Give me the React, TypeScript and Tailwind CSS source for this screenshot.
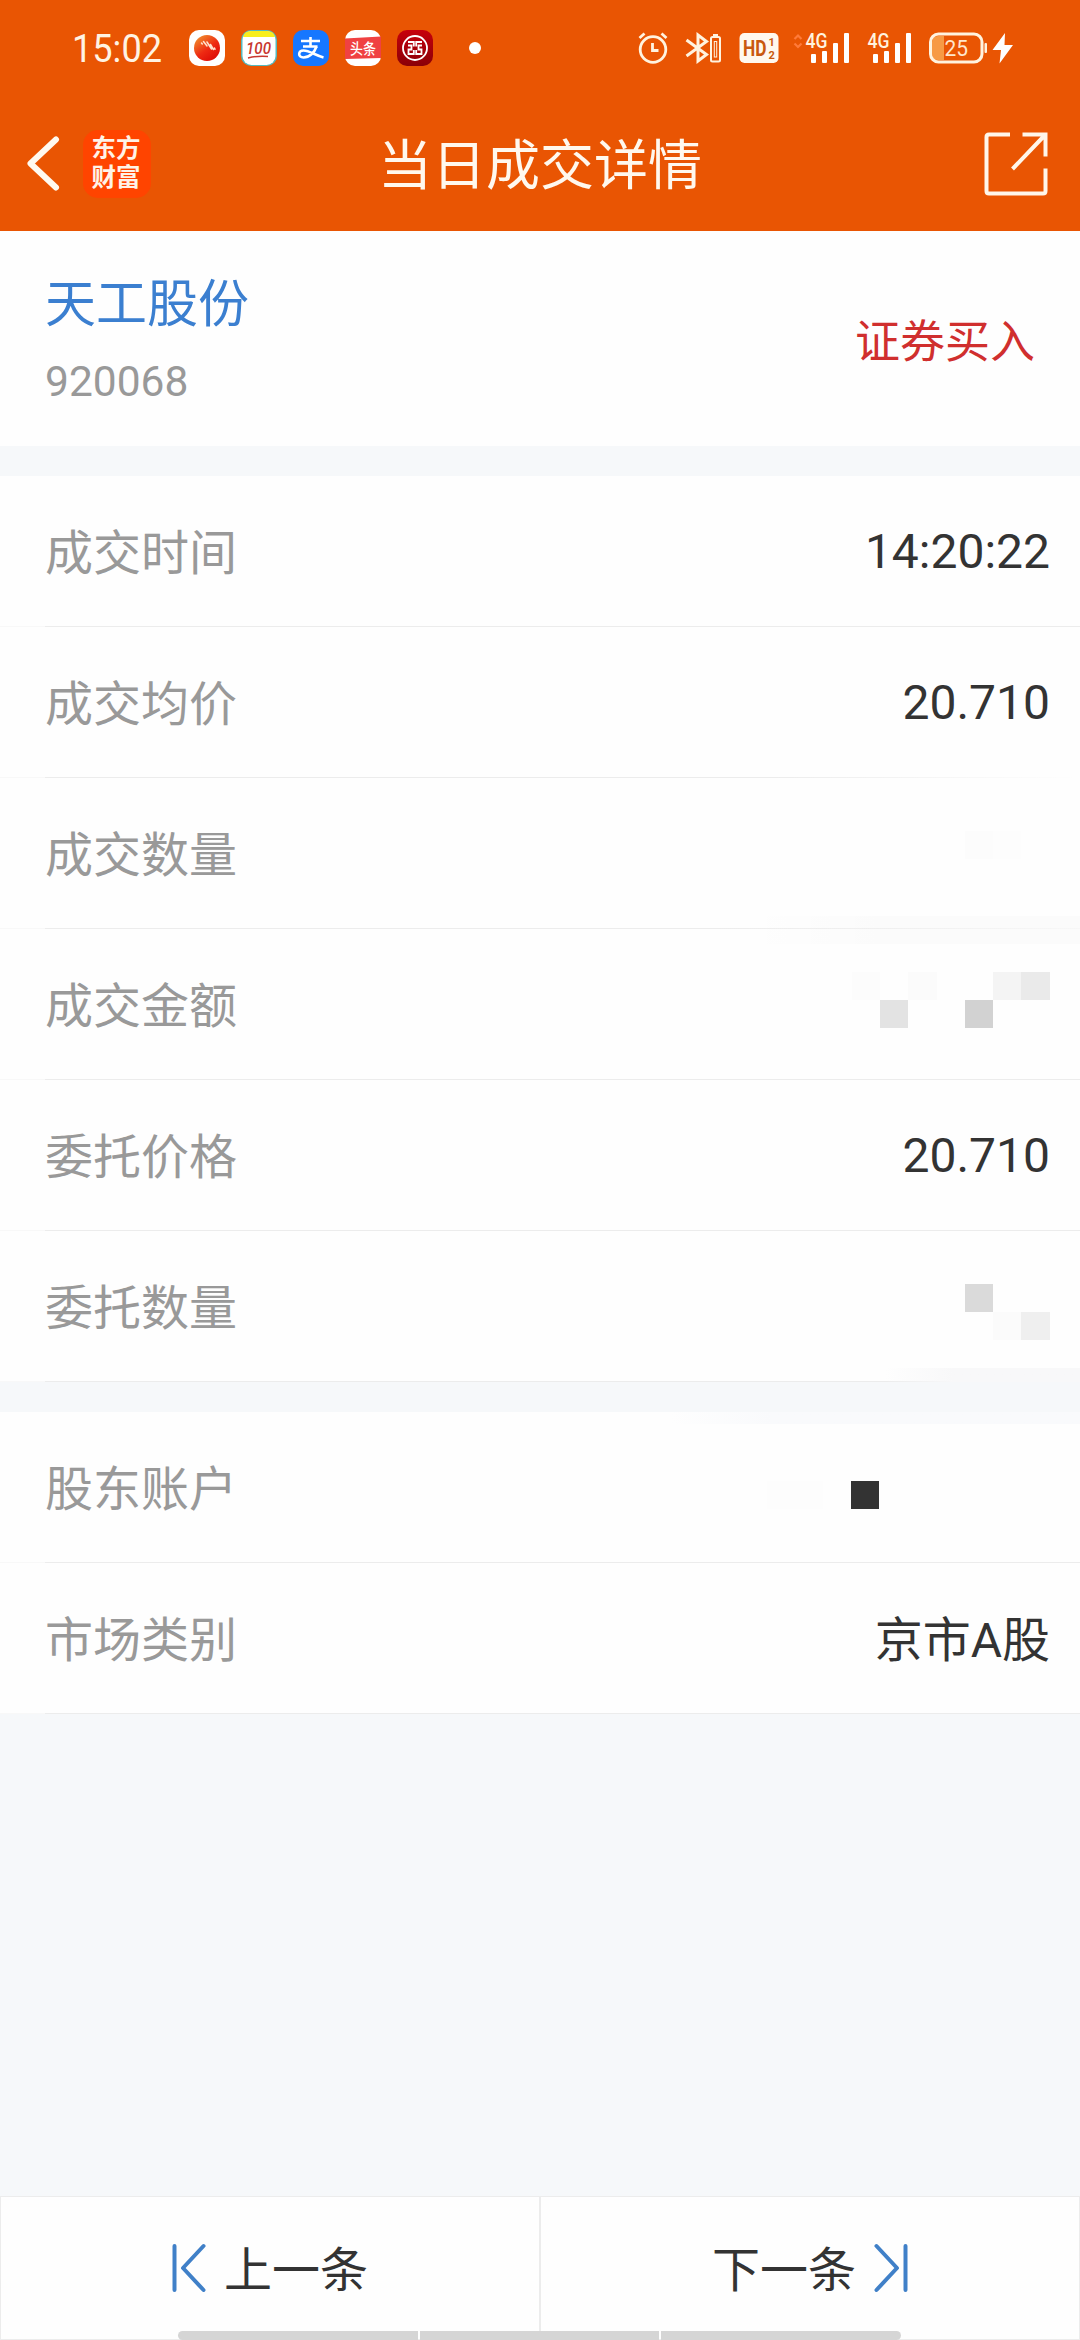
import React from "react";

const MOSAIC_AMOUNT = [
  "bg-[#fcfcfc]", "", "bg-[#fbfbfb]", "", "", "bg-[#f4f4f4]", "bg-[#eaeaea]",
  "", "bg-[#e3e3e3]", "", "", "bg-[#d2d2d2]", "", "",
];

const MOSAIC_ENTRUST = [
  "", "", "", "", "bg-[#dadada]", "", "",
  "", "", "", "", "", "bg-[#fbfbfb]", "bg-[#efefef]",
];

interface MosaicProps {
  cells: string[];
  className?: string;
}

const Mosaic: React.FC<MosaicProps> = ({ cells, className = "" }) => (
  <div className={`grid grid-cols-[28px_28px_29px_28px_28px_28px_29px] ${className}`}>
    {cells.map((cell, i) => (
      <div key={i} className={`h-7 ${cell}`} />
    ))}
  </div>
);

interface RowProps {
  label: string;
  children?: React.ReactNode;
  line?: string;
}

const Row: React.FC<RowProps> = ({ label, children, line = "bg-[#ececec]" }) => (
  <div className="relative flex h-[151px] flex-col bg-[#fefefe]">
    <div className="flex flex-1 items-center justify-between pr-[30px] pl-[45px]">
      <span className="pt-[6px] text-5xl leading-none text-[#999999]">{label}</span>
      <div className="text-5xl leading-none text-[#333333]">{children}</div>
    </div>
    <div className="flex h-px">
      <div className="w-[45px] bg-[#f8f8f8]" />
      <div className={`flex-1 ${line}`} />
    </div>
  </div>
);

const Signal = ({ arrows = false }: { arrows?: boolean }) => (
  <svg width="58" height="48" viewBox="0 -8 58 48">
    {arrows && (
      <path d="M1.500 7l3.500-3.500L8.500 7M1.500 11.500l3.500 3.500 3.500-3.500" fill="none" stroke="#ff7a3a" strokeWidth="2.200" />
    )}
    <text x="12.500" y="15.500" fontSize="19.500" textLength="22" lengthAdjust="spacingAndGlyphs" fontWeight="500" fill="#fff3df" fontFamily="Roboto, sans-serif">
      4G
    </text>
    <g fill="#fff">
      <rect x="18" y="22" width="5" height="9" rx="1" />
      <rect x="29" y="19" width="5" height="12" rx="1" />
      <rect x="40" y="11" width="5" height="20" rx="1" />
      <rect x="51" y="1" width="5" height="30" rx="1" />
    </g>
  </svg>
);

const StatusApps = () => (
  <div className="flex items-center gap-4">
    <svg width="36" height="36" viewBox="0 0 36 36">
      <defs>
        <linearGradient id="ball" x1="0.1" y1="0.1" x2="0.7" y2="0.9">
          <stop offset="0" stopColor="#f08a2c" />
          <stop offset="0.6" stopColor="#ee2a12" />
          <stop offset="1" stopColor="#e01008" />
        </linearGradient>
      </defs>
      <rect width="36" height="36" rx="10" fill="#fff" />
      <circle cx="18" cy="18" r="13" fill="url(#ball)" />
      <path d="M12.500 13l.8 1M14.500 11.500l3.500 4.500M18 12l4.500 7M21.500 14.500l3 5M25.500 18l.5 1.200" stroke="#ffe3cf" strokeWidth="1.500" strokeLinecap="round" />
    </svg>
    <svg width="36" height="36" viewBox="0 0 36 36">
      <rect width="36" height="36" rx="10" fill="#55b9bd" />
      <rect x="1.500" y="1" width="33" height="34" rx="9" fill="#fff" />
      <path d="M2 7q1-6 8-6h16q7 0 8 6z" fill="#f8ee1c" />
      <text x="5" y="23.500" fontSize="16" fontStyle="italic" textLength="25" lengthAdjust="spacingAndGlyphs" fill="#c8372f" fontFamily="Roboto, sans-serif" fontWeight="500">
        100
      </text>
      <path d="M7 28q10-2.500 20-1.500" stroke="#c8372f" strokeWidth="1.400" fill="none" />
    </svg>
    <svg width="36" height="36" viewBox="0 0 36 36">
      <rect width="36" height="36" rx="10" fill="#1677ff" />
      <g fill="none" stroke="#fff" strokeWidth="2.600">
        <path d="M8 11h19M17.500 7v9M10 16.500h14.500" />
        <path d="M23.500 16.500c-2 6-7 11-13 11-6 0-5.500-7 0-7 6 0 12 5 20 7" />
      </g>
    </svg>
    <svg width="36" height="36" viewBox="0 0 36 36">
      <rect width="36" height="36" rx="10" fill="#fff" />
      <path d="M0 8.500l36-2v21.500l-36 1z" fill="#f04142" />
      <text x="5" y="23.800" fontSize="15" textLength="26" lengthAdjust="spacingAndGlyphs" fontWeight="500" fill="#fff" fontFamily="'Noto Sans CJK SC', sans-serif">
        头条
      </text>
    </svg>
    <svg width="36" height="36" viewBox="0 0 36 36">
      <defs>
        <linearGradient id="bank" x1="0" y1="0" x2="0" y2="1">
          <stop offset="0" stopColor="#c7000b" />
          <stop offset="1" stopColor="#8a0008" />
        </linearGradient>
      </defs>
      <rect width="36" height="36" rx="10" fill="url(#bank)" />
      <g fill="none" stroke="#fff" strokeWidth="1.800">
        <circle cx="18" cy="18" r="12" />
        <path d="M11 12h5.800v4.500M11 15.500h3.500v4H11.500V24h5.300v-4M25 12h-5.800v4.500M25 15.500h-3.500v4h3V24h-5.300v-4" />
      </g>
    </svg>
    <div className="ml-5 size-3 rounded-full bg-white" />
  </div>
);

const StatusBar = () => (
  <div className="flex h-24 items-center pl-[72px]">
    <svg className="mr-[21px]" width="96" height="56" viewBox="0 0 96 56">
      <text x="0" y="41.500" fontSize="38.500" textLength="90" lengthAdjust="spacingAndGlyphs" fill="#fff3e3" fontFamily="Roboto, sans-serif">
        15:02
      </text>
    </svg>
    <StatusApps />
    <div className="flex flex-1 items-center justify-end pr-[67px]">
      {/* alarm */}
      <svg className="mr-4" width="32" height="32" viewBox="0 0 32 32" fill="none" stroke="#fff3df" strokeWidth="2.800">
        <circle cx="16" cy="17.500" r="12.800" />
        <path d="M15.500 11v7.500h6" />
        <path d="M2.500 6l5-4.500M29.500 6l-5-4.500" />
      </svg>
      {/* bluetooth with device battery */}
      <svg className="mr-[17px]" width="37" height="32" viewBox="0 0 37 32" fill="none" stroke="#fff3df">
        <path d="M1.500 8l20 14.500-8.500 6.500V3l8.500 6.500L1.500 24" strokeWidth="3" />
        <rect x="26" y="5" width="9" height="24.500" rx="1.500" strokeWidth="2" />
        <rect x="29.300" y="9.500" width="2.400" height="15.500" strokeWidth="1" />
        <path d="M28 3h5" strokeWidth="2" />
      </svg>
      {/* HD voice */}
      <svg className="mr-[14px]" width="40" height="32" viewBox="0 0 40 32">
        <rect x="0.500" y="1" width="39" height="30" rx="5" fill="#fff8ee" />
        <g fill="#c9580f" fontFamily="Roboto, sans-serif" fontWeight="700">
          <text x="4" y="24" fontSize="22" textLength="23.500" lengthAdjust="spacingAndGlyphs">HD</text>
          <text x="29.500" y="13.500" fontSize="11">1</text>
          <text x="29.500" y="27" fontSize="11">2</text>
        </g>
      </svg>
      <Signal arrows />
      <div className="ml-1">
        <Signal />
      </div>
      {/* battery */}
      <svg className="ml-[16px]" width="84" height="32" viewBox="0 0 84 32">
        <path d="M9 4h6v24H9q-6 0-6-6V10q0-6 6-6z" fill="#f79a45" />
        <rect x="1.500" y="2" width="51.500" height="28" rx="8" fill="none" stroke="#fff3df" strokeWidth="3" />
        <rect x="55.500" y="11" width="2.500" height="10" rx="1" fill="#fff3df" />
        <text x="15.500" y="23.500" fontSize="21.500" textLength="23.500" lengthAdjust="spacingAndGlyphs" fill="#ffe6cc" fontFamily="Roboto, sans-serif">25</text>
        <path d="M76 1L63.500 18h8.500l-1.500 13.500L84 13h-8.500z" fill="#fff" />
      </svg>
    </div>
  </div>
);

const NavBar = () => (
  <div className="grid h-[135px] grid-cols-[1fr_auto_1fr] items-center">
    <div className="flex items-center pl-[26px]">
      <svg width="34" height="56" viewBox="0 0 34 56" fill="none" stroke="#fffaf0" strokeWidth="6" strokeLinecap="round" strokeLinejoin="round">
        <path d="M30 3.500L4.500 27.500 30 51.500" />
      </svg>
      <div className="ml-[23px] grid size-[68px] place-content-center rounded-[15px] bg-[#ff4400] pr-[2px] pb-[2px] text-center text-[24.5px] leading-[29px] font-bold text-[#fff3e8]">
        <span>东方</span>
        <span>财富</span>
      </div>
    </div>
    <h1 className="pt-[7px] text-[54px] leading-none font-normal text-[#fff8ee]">当日成交详情</h1>
    <div className="flex justify-end pr-[32px]">
      <svg width="64" height="64" viewBox="0 0 64 64" fill="none" stroke="#fff6ea" strokeWidth="4">
        <path d="M26 2.500H5Q2.500 2.500 2.500 5v54q0 2.500 2.500 2.500h54q2.500 0 2.500-2.500V36.500" />
        <path d="M38.500 2.500h23V24.500M61 3L28.500 37" />
      </svg>
    </div>
  </div>
);

const StepIcon = ({ flip = false }: { flip?: boolean }) => (
  <svg className={flip ? "rotate-180" : ""} width="34" height="50" viewBox="0 0 34 50" fill="none" stroke="#4080c8" strokeWidth="4" strokeLinecap="round" strokeLinejoin="round">
    <path d="M2.500 3v44M31.500 3L11 25l20.500 22" />
  </svg>
);

export default function App() {
  return (
    <div className="relative flex h-[2340px] w-[1080px] flex-col overflow-hidden bg-[#f6f8fa] font-[Roboto,'Noto_Sans_CJK_SC',sans-serif]">
      <header className="h-[231px] bg-[#e95503]">
        <StatusBar />
        <NavBar />
      </header>

      <section className="flex h-[215px] items-center justify-between bg-[#fefefe] px-[45px] pt-[7px]">
        <div className="flex flex-col">
          <span className="text-[51px] leading-[60px] text-[#3b7fd0]">天工股份</span>
          <span className="mt-5 text-[42.5px] leading-[54px] text-[#999999]">920068</span>
        </div>
        <span className="text-[45px] leading-none text-[#d02f2e]">证券买入</span>
      </section>

      <section className="mt-[30px]">
        <Row label="成交时间">
          <div className="pt-[2px]">14:20:22</div>
        </Row>
        <Row label="成交均价" line="bg-linear-to-r from-[#ececec] from-70% to-[#fefefe]">
          <div className="pt-[2px]">20.710</div>
        </Row>
        <Row label="成交数量" line="bg-linear-to-r from-[#ececec] from-65% to-[#fafafa]">
          <div className="mb-[17px] flex pr-[29px]">
            <div className="size-7 bg-[#fcfcfc]" />
            <div className="size-7 bg-[#fdfdfd]" />
          </div>
          <div className="absolute right-0 -bottom-[15px] z-10 h-7 w-[335px] bg-linear-to-r from-transparent to-black/[0.012] to-40%" />
        </Row>
        <Row label="成交金额">
          <Mosaic cells={MOSAIC_AMOUNT} className="-mt-[8px]" />
        </Row>
        <Row label="委托价格">
          <div className="pt-[2px]">20.710</div>
        </Row>
        <Row label="委托数量">
          <Mosaic cells={MOSAIC_ENTRUST} className="mt-[11px]" />
          <div className="absolute right-0 bottom-0 h-[14px] w-[195px] bg-linear-to-r from-transparent to-[#f8f8f9] to-35%" />
        </Row>
      </section>

      <section className="mt-[30px]">
        <Row label="股东账户">
          <div className="mt-[16px] flex">
            <div className="mr-7 h-7 w-14 bg-[#fdfdfd]" />
            <div className="mr-[171px] size-7 bg-[#333333]" />
          </div>
          <div className="absolute top-0 right-0 h-3 w-[410px] bg-linear-to-r from-transparent to-[#f9fafc] to-25%" />
        </Row>
        <Row label="市场类别">
          <div className="pt-[6px]">京市A股</div>
        </Row>
      </section>

      <footer className="mt-auto flex h-36 text-5xl leading-none text-[#333333]">
        <button className="flex flex-1 items-center justify-center gap-[18px] border border-[#ececec] bg-[#fefefe]">
          <StepIcon />
          <span className="pt-[6px]">上一条</span>
        </button>
        <button className="flex flex-1 items-center justify-center gap-[18px] border border-[#ececec] bg-[#fefefe]">
          <span className="pt-[6px]">下一条</span>
          <StepIcon flip />
        </button>
      </footer>

      {/* gesture bar */}
      <div className="absolute bottom-0 left-[178px] flex h-[9px] w-[723px] gap-[2px]">
        <div className="flex-1 rounded-l-full bg-[#d5d5d5]" />
        <div className="flex-1 bg-[#d5d5d5]" />
        <div className="flex-1 rounded-r-full bg-[#d5d5d5]" />
      </div>
    </div>
  );
}
